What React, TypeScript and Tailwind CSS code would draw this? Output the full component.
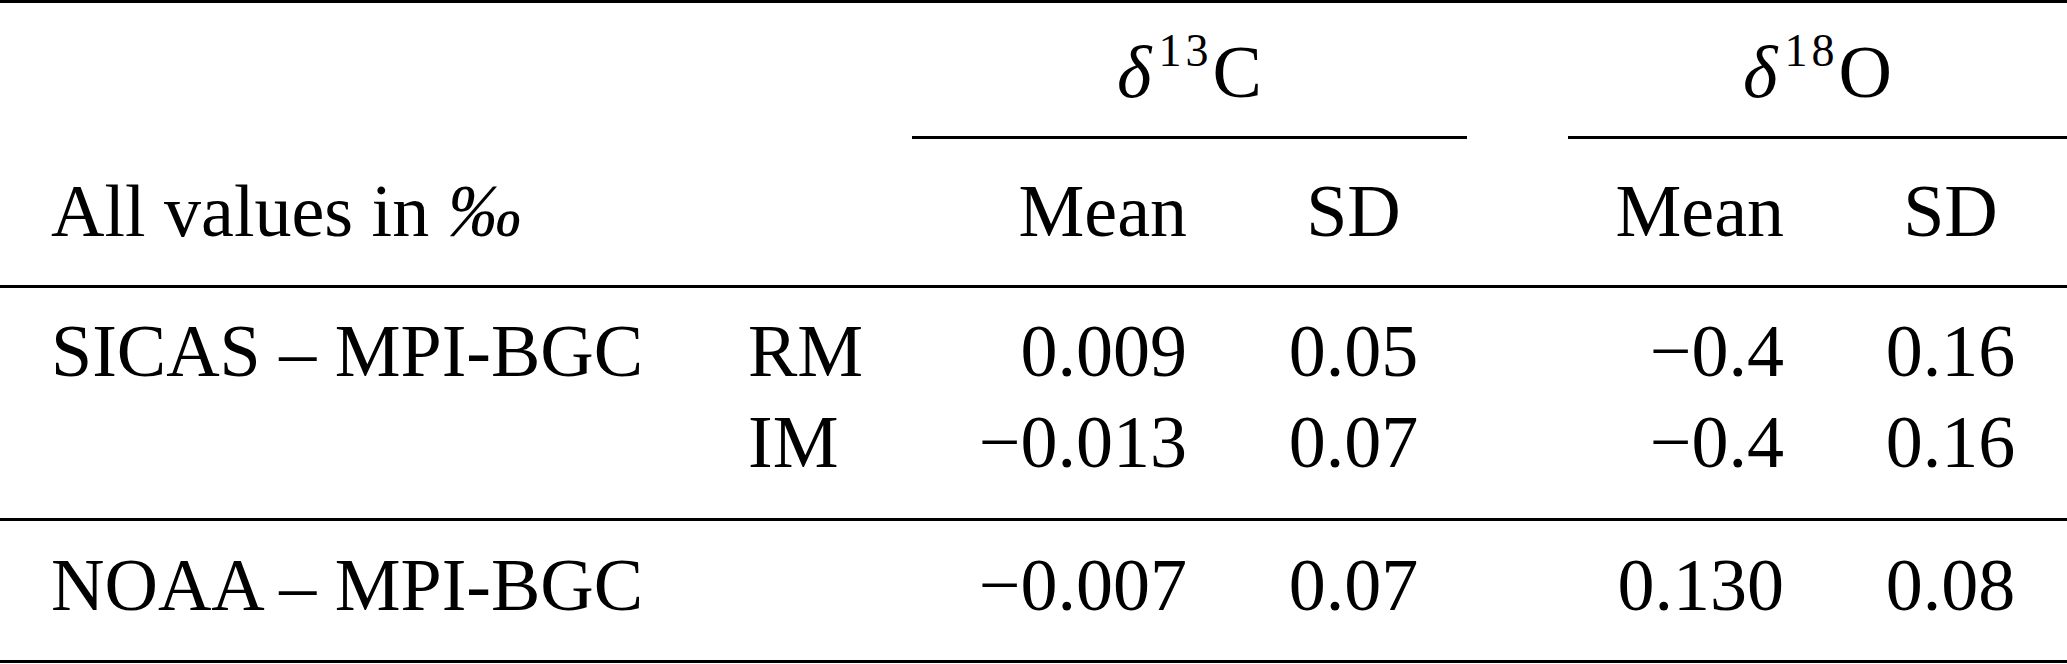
const cols = "grid grid-cols-[748px_164px_308px_267px_347px_233px]";

type Row = { label?: string; sub: string; cMean: string; cSd: string; oMean: string; oSd: string };

const sicas: Row[] = [
  { label: "SICAS – MPI-BGC", sub: "RM", cMean: "0.009", cSd: "0.05", oMean: "−0.4", oSd: "0.16" },
  { sub: "IM", cMean: "−0.013", cSd: "0.07", oMean: "−0.4", oSd: "0.16" },
];

const noaa: Row[] = [
  { label: "NOAA – MPI-BGC", sub: "", cMean: "−0.007", cSd: "0.07", oMean: "0.130", oSd: "0.08" },
];

function Rule() {
  return <div className="h-[3px] w-full bg-black" />;
}

function Isotope({ mass, el }: { mass: string; el: string }) {
  return (
    <>
      <i>δ</i>
      <sup className="text-[46px] -top-[31px] ml-[7px] tracking-[4px]">{mass}</sup>
      {el}
    </>
  );
}

function DataRow({ row, leading }: { row: Row; leading: string }) {
  return (
    <div className={`${cols} ${leading}`}>
      <div className="pl-[51px] whitespace-nowrap">{row.label}</div>
      <div>{row.sub}</div>
      <div className="text-right pr-[33px]">{row.cMean}</div>
      <div className="text-center">{row.cSd}</div>
      <div className="text-right pr-[50px]">{row.oMean}</div>
      <div className="text-center">{row.oSd}</div>
    </div>
  );
}

export default function App() {
  return (
    <div className="w-[2067px] h-[664px] bg-white text-black font-['Liberation_Serif','Times_New_Roman',serif] text-[74px] overflow-hidden">
      <Rule />

      {/* isotope headers */}
      <div className={`${cols} h-[133px] pt-[28px] leading-[82px]`}>
        <div className="col-span-2" />
        <div className="col-span-2 mr-[20px] text-center whitespace-nowrap">
          <Isotope mass="13" el="C" />
        </div>
        <div className="col-span-2 ml-[81px] text-center whitespace-nowrap">
          <Isotope mass="18" el="O" />
        </div>
      </div>

      {/* cmidrules */}
      <div className={`${cols} h-[3px]`}>
        <div className="col-span-2" />
        <div className="col-span-2 mr-[20px] bg-black" />
        <div className="col-span-2 ml-[81px] bg-black" />
      </div>

      <div className={`${cols} h-[146px] pt-[31px] leading-[82px]`}>
        <div className="pl-[51px] whitespace-nowrap">
          All values in <i>‰</i>
        </div>
        <div />
        <div className="text-right pr-[33px]">Mean</div>
        <div className="text-center">SD</div>
        <div className="text-right pr-[50px]">Mean</div>
        <div className="text-center">SD</div>
      </div>
      <Rule />

      <div className="h-[230px] pt-[18px]">
        {sicas.map((r, i) => (
          <DataRow key={i} row={r} leading="leading-[91px]" />
        ))}
      </div>
      <Rule />

      <div className="h-[139px] pt-[23px]">
        {noaa.map((r, i) => (
          <DataRow key={i} row={r} leading="leading-[82px]" />
        ))}
      </div>
      <Rule />
    </div>
  );
}
